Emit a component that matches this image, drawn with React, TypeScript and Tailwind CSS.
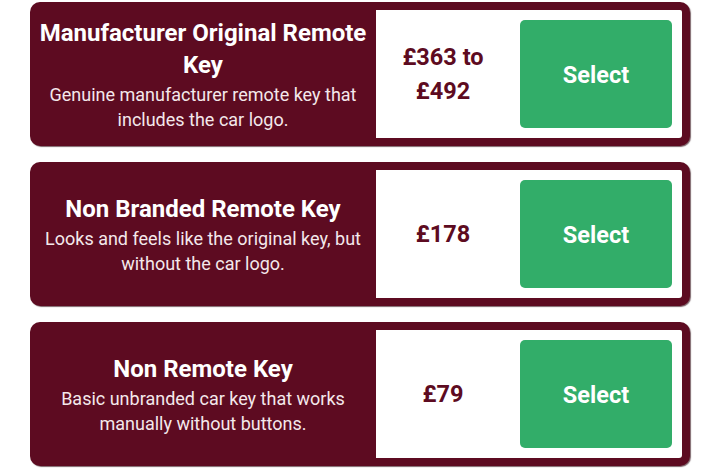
import React from 'react';

interface KeyOption {
  title: string;
  description: string;
  price: string;
}

const OPTIONS: KeyOption[] = [
  {
    title: 'Manufacturer Original Remote Key',
    description: 'Genuine manufacturer remote key that includes the car logo.',
    price: '£363 to £492',
  },
  {
    title: 'Non Branded Remote Key',
    description: 'Looks and feels like the original key, but without the car logo.',
    price: '£178',
  },
  {
    title: 'Non Remote Key',
    description: 'Basic unbranded car key that works manually without buttons.',
    price: '£79',
  },
];

const OptionCard: React.FC<{ option: KeyOption }> = ({ option }) => (
  <div className="flex h-[144px] rounded-[10px] bg-[#5d0b21] py-2 pr-2 shadow-[1px_1px_1px_rgba(40,0,10,0.6)]">
    {/* Left: name + description */}
    <div className="flex w-[346px] flex-col items-center justify-center px-[6px] text-center">
      <h3 className="text-[24px] font-bold leading-[32px] text-white">{option.title}</h3>
      <p className="mt-[1px] text-[18px] leading-[25px] text-[#f4e8eb]">{option.description}</p>
    </div>

    {/* Right: price + action */}
    <div className="flex flex-1 items-center gap-[10px] rounded-br-[3px] rounded-tr-[2px] bg-white py-[10px] pr-[10px]">
      <div className="flex flex-1 items-center justify-center px-2 text-center text-[23.5px] font-bold leading-[34px] text-[#5d0b21]">
        {option.price}
      </div>
      <button className="h-full w-[152px] rounded-[5px] bg-[#32ad69] pt-[4px] text-[23.5px] font-bold text-white">
        Select
      </button>
    </div>
  </div>
);

export default function App() {
  return (
    <div className="min-h-[476px] bg-white px-[30px] pt-[2px] font-['Roboto','Liberation_Sans',sans-serif]">
      <div className="flex flex-col gap-4">
        {OPTIONS.map((option) => (
          <OptionCard key={option.title} option={option} />
        ))}
      </div>
    </div>
  );
}
